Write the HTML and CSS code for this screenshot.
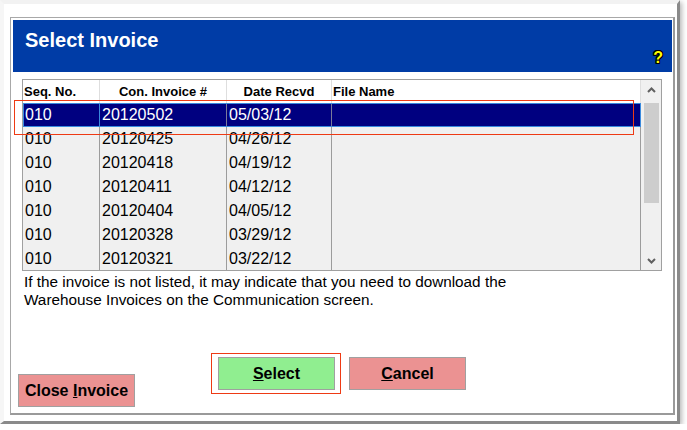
FILE: index.html
```html
<!DOCTYPE html>
<html>
<head>
<meta charset="utf-8">
<title>Select Invoice</title>
<link rel="stylesheet" href="styles.css">
</head>
<body>
<div class="window">
  <div class="dialog">
    <div class="titlebar">
      <h1 class="title">Select Invoice</h1>
      <span class="help">?</span>
    </div>
    <div class="content">
      <div class="grid">
        <div class="list">
          <div class="row head">
            <div class="c">Seq. No.</div>
            <div class="c center">Con. Invoice #</div>
            <div class="c center">Date Recvd</div>
            <div class="c">File Name</div>
          </div>
          <div class="row sel">
            <div class="c focus">010</div>
            <div class="c">20120502</div>
            <div class="c">05/03/12</div>
            <div class="c"></div>
          </div>
          <div class="row">
            <div class="c">010</div>
            <div class="c">20120425</div>
            <div class="c">04/26/12</div>
            <div class="c"></div>
          </div>
          <div class="row">
            <div class="c">010</div>
            <div class="c">20120418</div>
            <div class="c">04/19/12</div>
            <div class="c"></div>
          </div>
          <div class="row">
            <div class="c">010</div>
            <div class="c">20120411</div>
            <div class="c">04/12/12</div>
            <div class="c"></div>
          </div>
          <div class="row">
            <div class="c">010</div>
            <div class="c">20120404</div>
            <div class="c">04/05/12</div>
            <div class="c"></div>
          </div>
          <div class="row">
            <div class="c">010</div>
            <div class="c">20120328</div>
            <div class="c">03/29/12</div>
            <div class="c"></div>
          </div>
          <div class="row">
            <div class="c">010</div>
            <div class="c">20120321</div>
            <div class="c">03/22/12</div>
            <div class="c"></div>
          </div>
        </div>
        <div class="scrollbar">
          <div class="sb-btn up">
            <svg width="9" height="6" viewBox="0 0 9 6"><polyline points="1,5 4.5,1.5 8,5" fill="none" stroke="#606060" stroke-width="2"/></svg>
          </div>
          <div class="sb-track"><div class="sb-thumb"></div></div>
          <div class="sb-btn down">
            <svg width="9" height="6" viewBox="0 0 9 6"><polyline points="1,1 4.5,4.5 8,1" fill="none" stroke="#606060" stroke-width="2"/></svg>
          </div>
        </div>
        <div class="mark mark-row"></div>
      </div>
      <p class="note">If the invoice is not listed, it may indicate that you need to download the<br>Warehouse Invoices on the Communication screen.</p>
      <div class="footer">
        <button class="btn pink close">Close <u>I</u>nvoice</button>
        <div class="actions">
          <div class="btn-wrap">
            <button class="btn green"><u>S</u>elect</button>
            <span class="mark mark-btn"></span>
          </div>
          <button class="btn pink"><u>C</u>ancel</button>
        </div>
      </div>
    </div>
  </div>
</div>
</body>
</html>
```
FILE: styles.css
```css
* { box-sizing: border-box; }

html, body {
  margin: 0;
  padding: 0;
  background: #ffffff;
  font-family: "Liberation Sans", Arial, sans-serif;
}

.window {
  width: 680px;
  height: 424px;
  border-top: 4px solid #f2f2f2;
  border-left: 4px solid #f6f6f6;
  border-right: 3px solid #8a8a8a;
  border-bottom: 3px solid #8a8a8a;
  box-shadow: 2px 2px 5px rgba(0, 0, 0, 0.28);
  padding: 13px 0 0 6px;
  background: #ffffff;
}

.dialog {
  width: 665px;
  height: 398px;
  border: 1px solid #a8a8a8;
  border-right: 2px solid #9a9a9a;
  border-bottom: 2px solid #9a9a9a;
  padding: 2px 1px 0 2px;
  background: #ffffff;
}

.titlebar {
  height: 52px;
  background: #003ca6;
  display: flex;
  justify-content: space-between;
  align-items: flex-start;
}

.title {
  margin: 0;
  padding: 9px 0 0 12px;
  font-size: 20px;
  font-weight: bold;
  line-height: 23px;
  color: #ffffff;
}

.help {
  align-self: flex-end;
  margin: 0 9px 6px 0;
  font-size: 16px;
  line-height: 16px;
  font-weight: bold;
  color: #ffff00;
  text-shadow: 1px 0 0 #000, -1px 0 0 #000, 0 1px 0 #000, 0 -1px 0 #000,
               1px 1px 0 #000, -1px -1px 0 #000, 1px -1px 0 #000, -1px 1px 0 #000;
}

.content {
  height: 341px;
  padding: 7px 10px 6px 9px;
  display: flex;
  flex-direction: column;
}

.grid {
  position: relative;
  width: 640px;
  height: 192px;
  border: 1px solid #a0a0a0;
  display: flex;
  background: #f0f0f0;
}

.list {
  width: 618px;
  overflow: hidden;
}

.row {
  display: grid;
  grid-template-columns: 77px 127px 105px 309px;
  height: 24px;
  background: #f0f0f0;
}

.row .c {
  border-right: 1px solid #9c9c9c;
  padding-left: 2px;
  font-size: 16px;
  line-height: 24px;
  color: #000000;
  white-space: nowrap;
}

.row.head {
  height: 23px;
  background: #ffffff;
}

.row.head .c {
  border-right-color: #dedede;
  padding-left: 1px;
  font-size: 13px;
  font-weight: bold;
  line-height: 23px;
}

.row.head .c.center {
  text-align: center;
  padding-left: 0;
}

.row.sel {
  background: #000080;
  outline: 1px solid #3a8ade;
  outline-offset: -1px;
}

.row.sel .c {
  color: #ffffff;
  border-right-color: #7a7a9a;
}

.row.sel .c.focus {
  border: 1px solid #3a8ade;
  padding-left: 1px;
  line-height: 22px;
}

.scrollbar {
  width: 17px;
  margin-left: 2px;
  display: flex;
  flex-direction: column;
  background: #f0f0f0;
}

.sb-btn {
  display: flex;
  justify-content: center;
  align-items: center;
}

.sb-btn.up {
  height: 23px;
  padding-bottom: 3px;
}

.sb-btn.down {
  height: 20px;
  padding-top: 2px;
}

.sb-track {
  flex: 1;
}

.sb-thumb {
  height: 100px;
  margin-left: 1px;
  width: 15px;
  background: #cdcdcd;
}

.mark {
  position: absolute;
  border: 1px solid #ee3a14;
  pointer-events: none;
}

.mark-row {
  left: -9px;
  top: 20px;
  width: 620px;
  height: 35px;
}

.note {
  margin: 2px 0 0 2px;
  font-size: 15.3px;
  line-height: 18px;
  color: #000000;
}

.footer {
  margin-top: auto;
  display: flex;
  align-items: flex-end;
}

.btn {
  width: 117px;
  height: 33px;
  border: 1px solid #a0a0a0;
  padding: 0;
  font-family: "Liberation Sans", Arial, sans-serif;
  font-size: 16px;
  font-weight: bold;
  color: #000000;
  cursor: pointer;
}

.btn.pink { background: #eb9292; }
.btn.green { background: #90ee90; }

.btn.close {
  margin-left: -4px;
}

.actions {
  display: flex;
  gap: 14px;
  margin-left: 83px;
  margin-bottom: 17px;
}

.btn-wrap {
  position: relative;
  display: flex;
}

.mark-btn {
  left: -7px;
  top: -4px;
  width: 130px;
  height: 41px;
}
```
